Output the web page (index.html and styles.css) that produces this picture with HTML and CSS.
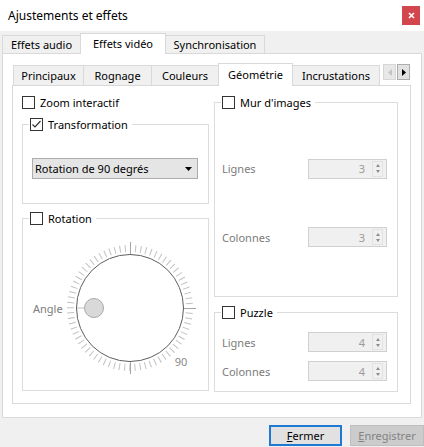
FILE: index.html
```html
<!DOCTYPE html>
<html lang="fr">
<head>
<meta charset="utf-8">
<title>Ajustements et effets</title>
<link rel="stylesheet" href="styles.css">
</head>
<body>
<div class="window">
  <div class="titlebar">
    <span class="title">Ajustements et effets</span>
    <span class="close"><svg width="7" height="7" viewBox="0 0 7 7"><path d="M1 1L6 6M6 1L1 6" stroke="#fff" stroke-width="1.6"/></svg></span>
  </div>

  <div class="tabbar outer-tabs">
    <div class="tab t-audio">Effets audio</div>
    <div class="tab t-video active">Effets vidéo</div>
    <div class="tab t-sync">Synchronisation</div>
  </div>

  <div class="outer-pane">
    <div class="tabbar inner-tabs">
      <div class="tab t-princ">Principaux</div>
      <div class="tab t-rogn">Rognage</div>
      <div class="tab t-coul">Couleurs</div>
      <div class="tab t-geom active">Géométrie</div>
      <div class="tab t-incr">Incrustations</div>
      <div class="scrollers">
        <span class="sbtn disabled"><svg width="4" height="7" viewBox="0 0 4 7"><polygon points="4,0 4,7 0,3.5" fill="#c4c4c4"/></svg></span>
        <span class="sbtn"><svg width="4" height="7" viewBox="0 0 4 7"><polygon points="0,0 0,7 4,3.5" fill="#000"/></svg></span>
      </div>
    </div>

    <div class="inner-pane">
      <div class="col">
        <div class="check"><span class="box"></span><span>Zoom interactif</span></div>

        <fieldset class="group trans">
          <legend><span class="check"><span class="box"><svg width="11" height="11" viewBox="0 0 11 11"><polyline points="1.5,5.5 4,8 9.5,2" fill="none" stroke="#333" stroke-width="1.2"/></svg></span><span>Transformation</span></span></legend>
          <div class="combo">
            <span>Rotation de 90 degrés</span>
            <svg width="7" height="4" viewBox="0 0 7 4"><polygon points="0,0 7,0 3.5,4" fill="#000"/></svg>
          </div>
        </fieldset>

        <fieldset class="group rot">
          <legend><span class="check"><span class="box"></span><span>Rotation</span></span></legend>
          <div class="dial-row">
            <span class="dim angle">Angle</span>
            <svg class="dial" width="140" height="140" viewBox="0 0 140 140">
              <circle cx="70" cy="70" r="59.5" fill="none" stroke="#c2c2c2" stroke-width="7" stroke-dasharray="1 4.1924" stroke-dashoffset="0.5"/>
              <g stroke="#a4a4a4" stroke-width="1">
                <line x1="70.5" y1="4" x2="70.5" y2="17"/>
                <line x1="70.5" y1="123" x2="70.5" y2="136"/>
                <line x1="123" y1="70.5" x2="136" y2="70.5"/>
              </g>
              <circle cx="70" cy="70" r="53.5" fill="#fff" stroke="#5e5e5e" stroke-width="1"/>
              <line x1="17" y1="70" x2="24" y2="70" stroke="#d4d4d4" stroke-width="1.5"/>
              <circle cx="34" cy="70" r="9.5" fill="#d9d9d9" stroke="#a9a9a9" stroke-width="1"/>
              <text x="121" y="128" text-anchor="middle" class="dial-num">90</text>
            </svg>
          </div>
        </fieldset>
      </div>

      <div class="col">
        <fieldset class="group wall">
          <legend><span class="check"><span class="box"></span><span>Mur d'images</span></span></legend>
          <div class="spinrows">
            <div class="spinrow">
              <span class="dim">Lignes</span>
              <div class="spin"><span class="val">3</span><span class="arrows"><i class="up"></i><i class="down"></i></span></div>
            </div>
            <div class="spinrow">
              <span class="dim">Colonnes</span>
              <div class="spin"><span class="val">3</span><span class="arrows"><i class="up"></i><i class="down"></i></span></div>
            </div>
          </div>
        </fieldset>

        <fieldset class="group puzzle">
          <legend><span class="check"><span class="box"></span><span>Puzzle</span></span></legend>
          <div class="puzzle-rows">
            <div class="spinrow">
              <span class="dim">Lignes</span>
              <div class="spin"><span class="val">4</span><span class="arrows"><i class="up"></i><i class="down"></i></span></div>
            </div>
            <div class="spinrow">
              <span class="dim">Colonnes</span>
              <div class="spin"><span class="val">4</span><span class="arrows"><i class="up"></i><i class="down"></i></span></div>
            </div>
          </div>
        </fieldset>
      </div>
    </div>
  </div>

  <div class="buttons">
    <button class="btn default"><u>F</u>ermer</button>
    <button class="btn disabled"><u>E</u>nregistrer</button>
  </div>
</div>
</body>
</html>
```

FILE: styles.css
```css
* { box-sizing: border-box; }
html, body { margin: 0; padding: 0; }
body {
  width: 424px;
  height: 447px;
  overflow: hidden;
  background: #f0f0f0;
  font-family: "Noto Sans", "Open Sans", sans-serif;
  font-size: 11px;
  color: #000;
}
.window {
  width: 424px;
  height: 447px;
  display: flex;
  flex-direction: column;
  background: #f0f0f0;
}

/* title bar */
.titlebar {
  height: 31px;
  flex: none;
  background: #fff;
  display: flex;
  align-items: center;
  justify-content: space-between;
  padding: 0 4px 0 8px;
  font-size: 12px;
}
.close {
  width: 18px;
  height: 19px;
  background: #d3464d;
  display: flex;
  align-items: center;
  justify-content: center;
  margin-top: -1px;
}

/* tabs */
.tabbar {
  display: flex;
  align-items: flex-end;
  flex: none;
}
.tab {
  height: 18px;
  border: 1px solid #d9d9d9;
  border-bottom: none;
  background: #f0f0f0;
  display: flex;
  align-items: center;
  justify-content: center;
  margin-right: -1px;
  white-space: nowrap;
  padding-bottom: 1px;
}
.tab.active {
  background: #fff;
  height: 21px;
  position: relative;
  z-index: 1;
  margin-bottom: -1px;
  padding-bottom: 2px;
}
.outer-tabs { height: 22px; padding-left: 2px; }
.t-audio { width: 79px; }
.t-video { width: 86px; }
.t-sync { width: 100px; }

.outer-pane {
  flex: none;
  height: 365px;
  margin: 0 2px;
  background: #fff;
  border: 1px solid #d9d9d9;
  padding: 9px 10px 13px 9px;
  display: flex;
  flex-direction: column;
}
.inner-tabs { height: 22px; padding-left: 1px; padding-right: 1px; }
.inner-tabs .tab { height: 20px; }
.inner-tabs .tab.active { height: 23px; }
.t-princ { width: 71px; }
.t-rogn { width: 69px; }
.t-coul { width: 68px; }
.t-geom { width: 75px; }
.t-incr { width: 88px; }
.scrollers {
  margin-left: auto;
  align-self: flex-end;
  margin-bottom: 5px;
  display: flex;
  gap: 1px;
}
.sbtn {
  width: 13px;
  height: 16px;
  border: 1px solid #adadad;
  background: #e1e1e1;
  display: flex;
  align-items: center;
  justify-content: center;
}
.sbtn.disabled { border-color: #d6d6d6; background: #e8e8e8; }

.inner-pane {
  height: 319px;
  flex: none;
  border: 1px solid #d9d9d9;
  background: #fff;
  padding: 9px 0 0 9px;
  display: grid;
  grid-template-columns: 187px 184px;
  column-gap: 5px;
  align-items: start;
}
.col { display: flex; flex-direction: column; }

/* checkbox */
.check {
  display: flex;
  align-items: center;
  gap: 5px;
  height: 15px;
  line-height: 15px;
  white-space: nowrap;
}
.box {
  width: 13px;
  height: 13px;
  border: 1px solid #333;
  background: #fff;
  display: flex;
  align-items: center;
  justify-content: center;
  flex: none;
}

/* group boxes */
.group {
  margin: 0;
  padding: 0;
  border: 1px solid #dcdcdc;
  min-width: 0;
}
.group legend {
  padding: 0 4px 0 1px;
  margin-left: 6px;
}
.trans { margin-top: 7px; }
.rot { margin-top: 7px; }
.puzzle { margin-top: 8px; }

.combo {
  margin: 26px 10px 24px 9px;
  height: 21px;
  border: 1px solid #adadad;
  background: #e5e5e5;
  display: flex;
  align-items: center;
  justify-content: space-between;
  padding: 0 5px 0 2px;
}

.dim { color: #7b7b7b; }
.dial-row {
  display: flex;
  align-items: center;
  padding: 12px 0 12px 10px;
}
.angle { width: 27px; }
.dial { display: block; flex: none; }
.dial-num { font-family: "Noto Sans", "Open Sans", sans-serif; font-size: 11px; fill: #888888; }

/* spin boxes */
.spinrows {
  height: 186px;
  display: flex;
  flex-direction: column;
  justify-content: space-evenly;
}
.puzzle-rows {
  display: flex;
  flex-direction: column;
  gap: 9px;
  padding: 12px 0 10px;
}
.spinrow {
  display: flex;
  align-items: center;
  justify-content: space-between;
  padding: 0 10px 0 7px;
}
.spin {
  width: 79px;
  height: 20px;
  border: 1px solid #d0d0d0;
  background: #f0f0f0;
  display: flex;
  align-items: center;
}
.spin .val {
  flex: 1;
  text-align: right;
  padding-right: 7px;
  color: #9a9a9a;
}
.arrows {
  width: 11px;
  height: 16px;
  margin-right: 3px;
  border: 1px solid #e2e2e2;
  display: flex;
  flex-direction: column;
  align-items: center;
  justify-content: center;
  gap: 3px;
}
.arrows i {
  display: block;
  width: 0;
  height: 0;
  border-left: 2.5px solid transparent;
  border-right: 2.5px solid transparent;
}
.arrows .up { border-bottom: 3px solid #8c8c8c; }
.arrows .down { border-top: 3px solid #8c8c8c; }

/* buttons */
.buttons {
  flex: 1;
  display: flex;
  justify-content: flex-end;
  align-items: flex-start;
  gap: 8px;
  padding-top: 7px;
}
.btn {
  height: 21px;
  font-family: inherit;
  font-size: 11px;
  padding: 0;
  border: 1px solid #adadad;
  background: #e1e1e1;
  color: #000;
}
.btn.default { width: 73px; border: 2px solid #1f78d1; }
.btn.disabled { width: 74px; background: #cccccc; border-color: #bfbfbf; color: #838383; }
```
